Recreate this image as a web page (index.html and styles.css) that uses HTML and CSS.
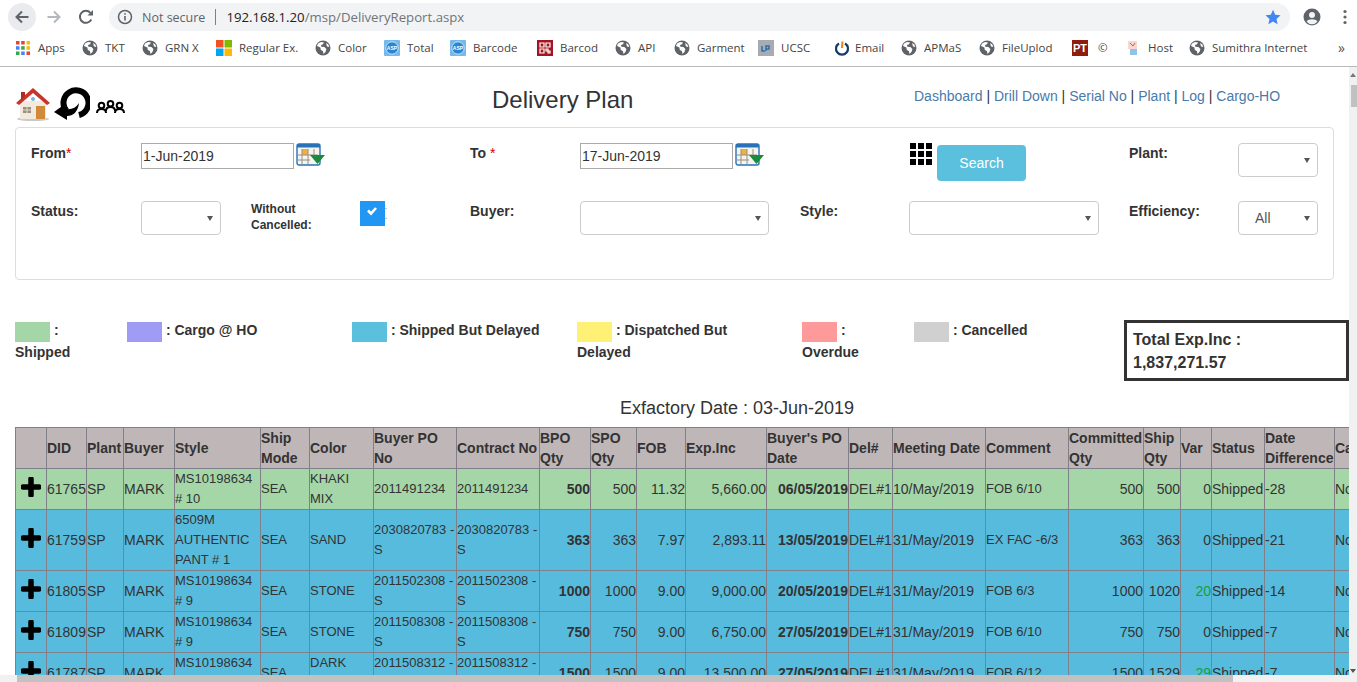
FILE: index.html
```html
<!DOCTYPE html>
<html lang="en">
<head>
<meta charset="utf-8">
<title>Delivery Plan</title>
<link rel="stylesheet" href="styles.css">
</head>
<body>
<svg class="defs" width="0" height="0" aria-hidden="true">
  <symbol id="globe" viewBox="0 0 16 16">
    <circle cx="8" cy="8" r="7.5" fill="#5f6368"/>
    <path d="M3 3.500l3-1.600 3 .6-1 1.800-2 .6.4 1.800 3 .4 2 2-.8 2.600-2 2.200-.8-2.800-2-1.200-.4-2.400L2 6z" fill="#fff"/>
    <path d="M11 3l2.400 1.600.9 2.400-2.300-.6z" fill="#fff"/>
  </symbol>
  <symbol id="asp" viewBox="0 0 16 16">
    <rect width="16" height="16" rx="1" fill="#74b8ec"/>
    <circle cx="8" cy="8" r="6.200" fill="#2b86d2" stroke="#e6f2fb" stroke-width=".8"/>
    <text x="8" y="9.800" text-anchor="middle" font-family="Liberation Sans, sans-serif" font-size="5" font-weight="700" fill="#fff">ASP</text>
  </symbol>
  <symbol id="cal" viewBox="0 0 30 26">
    <rect x="1" y="1" width="23" height="21" rx="2" fill="#f4f4f0" stroke="#2a72b8" stroke-width="1.4"/>
    <rect x="1" y="1" width="23" height="3.500" fill="#2a72b8"/>
    <rect x="6" y="6" width="6" height="6" fill="#eeb040"/>
    <path d="M6 6v15M12 6v15M18 6v6M2 12h20M2 17h12" stroke="#9a8f80" stroke-width="1" fill="none"/>
    <path d="M14 12h15l-7.500 9z" fill="#1a8a3c"/>
  </symbol>
  <symbol id="plus" viewBox="0 0 20 20">
    <path d="M10 2v16M2 10h16" stroke="#000" stroke-width="5.500" stroke-linecap="round"/>
  </symbol>
</svg>

<header class="toolbar">
  <button class="nav nav-back" type="button" aria-label="Back">
    <svg width="16" height="16" viewBox="0 0 16 16"><path d="M14.500 8H3M8 2.500L2.500 8 8 13.500" fill="none" stroke="#5f6368" stroke-width="2"/></svg>
  </button>
  <button class="nav nav-fwd" type="button" aria-label="Forward">
    <svg width="16" height="16" viewBox="0 0 16 16"><path d="M1.500 8H13M8 2.500L13.500 8 8 13.500" fill="none" stroke="#b4b7bb" stroke-width="2"/></svg>
  </button>
  <button class="nav nav-reload" type="button" aria-label="Reload">
    <svg width="16" height="16" viewBox="0 0 16 16"><path d="M13.300 10.500A6 6 0 1 1 12.400 3.800" fill="none" stroke="#5f6368" stroke-width="2"/><path d="M9.500 6.500H15V1z" fill="#5f6368"/></svg>
  </button>
  <div class="omnibox">
    <svg class="omni-info" width="16" height="16" viewBox="0 0 16 16"><circle cx="8" cy="8" r="6.500" fill="none" stroke="#5f6368" stroke-width="1.500"/><path d="M8 7v4.500M8 4.300v1.500" stroke="#5f6368" stroke-width="1.600"/></svg>
    <span class="omni-secure">Not secure</span>
    <span class="omni-sep"></span>
    <span class="omni-url"><b>192.168.1.20</b>/msp/DeliveryReport.aspx</span>
    <svg class="omni-star" width="16" height="16" viewBox="0 0 16 16"><path d="M8 .8l2.200 4.900 5.300.6-4 3.600 1.100 5.300L8 12.500l-4.600 2.700 1.100-5.300-4-3.600 5.300-.6z" fill="#4285f4"/></svg>
  </div>
  <svg class="avatar" width="18" height="18" viewBox="0 0 18 18"><circle cx="9" cy="9" r="8.500" fill="#5f6368"/><circle cx="9" cy="7" r="3" fill="#f1f3f4"/><path d="M3.500 13.500c2-3 9-3 11 0a7 7 0 0 1-11 0z" fill="#f1f3f4"/></svg>
  <svg class="dots" width="4" height="16" viewBox="0 0 4 16"><circle cx="2" cy="2.500" r="1.600" fill="#5f6368"/><circle cx="2" cy="8" r="1.600" fill="#5f6368"/><circle cx="2" cy="13.500" r="1.600" fill="#5f6368"/></svg>
</header>

<nav class="bookmarks">
  <a class="bm"><svg class="bm-ico" viewBox="0 0 16 16"><rect x="1" y="1" width="3.500" height="3.500" fill="#ea4335"/><rect x="6.200" y="1" width="3.500" height="3.500" fill="#ea4335"/><rect x="11.500" y="1" width="3.500" height="3.500" fill="#fbbc04"/><rect x="1" y="6.200" width="3.500" height="3.500" fill="#4285f4"/><rect x="6.200" y="6.200" width="3.500" height="3.500" fill="#34a853"/><rect x="11.500" y="6.200" width="3.500" height="3.500" fill="#fbbc04"/><rect x="1" y="11.500" width="3.500" height="3.500" fill="#34a853"/><rect x="6.200" y="11.500" width="3.500" height="3.500" fill="#4285f4"/><rect x="11.500" y="11.500" width="3.500" height="3.500" fill="#ea4335"/></svg>Apps</a>
  <a class="bm"><svg class="bm-ico"><use href="#globe"/></svg>TKT</a>
  <a class="bm"><svg class="bm-ico"><use href="#globe"/></svg>GRN X</a>
  <a class="bm"><svg class="bm-ico" viewBox="0 0 16 16"><rect width="7.500" height="7.500" fill="#f25022"/><rect x="8.500" width="7.500" height="7.500" fill="#7fba00"/><rect y="8.500" width="7.500" height="7.500" fill="#00a4ef"/><rect x="8.500" y="8.500" width="7.500" height="7.500" fill="#ffb900"/></svg>Regular Ex.</a>
  <a class="bm"><svg class="bm-ico"><use href="#globe"/></svg>Color</a>
  <a class="bm"><svg class="bm-ico"><use href="#asp"/></svg>Total</a>
  <a class="bm"><svg class="bm-ico"><use href="#asp"/></svg>Barcode</a>
  <a class="bm"><svg class="bm-ico" viewBox="0 0 16 16"><rect width="16" height="16" fill="#a31621"/><path d="M3 3h4v4H3zM9 3h4v4H9zM3 9h4v4H3zM9 9h2v2H9zM11 11h2v2h-2z" fill="none" stroke="#fff" stroke-width="1.200"/></svg>Barcod</a>
  <a class="bm"><svg class="bm-ico"><use href="#globe"/></svg>API</a>
  <a class="bm"><svg class="bm-ico"><use href="#globe"/></svg>Garment</a>
  <a class="bm"><svg class="bm-ico" viewBox="0 0 16 16"><rect width="16" height="16" fill="#a8acb0"/><path d="M4 6v5h3M8 11V6h3v3H8" fill="none" stroke="#2a70b0" stroke-width="1.500"/></svg>UCSC</a>
  <a class="bm bm-tight"><svg class="bm-ico" viewBox="0 0 16 16"><path d="M5 3.500a6 6 0 1 0 6 0" fill="none" stroke="#123a6b" stroke-width="2.200"/><path d="M8.500 1.500L8 8" stroke="#e8821e" stroke-width="2"/></svg>Email</a>
  <a class="bm"><svg class="bm-ico"><use href="#globe"/></svg>APMaS</a>
  <a class="bm"><svg class="bm-ico"><use href="#globe"/></svg>FileUplod</a>
  <a class="bm"><span class="bm-pt">PT</span>©</a>
  <a class="bm"><svg class="bm-ico" viewBox="0 0 16 16"><rect x="3" y="1" width="9" height="8" fill="#f6d8d0"/><path d="M5 3l3 3 2-3" stroke="#d9583c" fill="none"/><rect x="5" y="9" width="7" height="6" fill="#8fc4ea"/></svg>Host</a>
  <a class="bm"><svg class="bm-ico"><use href="#globe"/></svg>Sumithra Internet</a>
  <span class="bm-more">»</span>
</nav>

<div class="viewport">
  <div class="vp-row">
    <main class="page">
      <div class="top">
        <div class="top-icons">
          <svg width="36" height="34" viewBox="0 0 36 34">
            <ellipse cx="18" cy="32" rx="16" ry="2" fill="#c9c9c9"/>
            <path d="M5 14h26v18H5z" fill="#f3eadf"/>
            <path d="M1 16L18 1l17 15-3 2L18 6 4 18z" fill="#c8342a"/>
            <path d="M6 5h4v4l-4 4z" fill="#b02a22"/>
            <circle cx="18" cy="12" r="2" fill="#7fb2dc"/>
            <rect x="21" y="19" width="9" height="13" fill="#d08a3a"/>
            <rect x="8" y="20" width="8" height="6" fill="#9a8f78"/>
            <path d="M12 20v6M8 23h8" stroke="#f3eadf" stroke-width=".8"/>
          </svg>
          <svg class="top-reload" width="36" height="34" viewBox="0 0 36 34">
            <path d="M12.500 24A12.500 12.500 0 1 1 25 28" fill="none" stroke="#000" stroke-width="6"/>
            <path d="M0 25l11-8 1 5c5 1 10-1 13-6-1 9-6 13-12 13l0 4z" fill="#000"/>
          </svg>
          <svg class="top-people" width="29" height="14" viewBox="0 0 29 14">
            <g fill="none" stroke="#000" stroke-width="2">
              <circle cx="5.500" cy="5.500" r="2.800"/><path d="M1 13c0-3 2-4 4.500-4s4.500 1 4.500 4"/>
              <circle cx="14.500" cy="3.800" r="2.800"/><path d="M10 11c0-3 2-4 4.500-4s4.500 1 4.500 4"/>
              <circle cx="23.500" cy="5.500" r="2.800"/><path d="M19 13c0-3 2-4 4.500-4s4.500 1 4.500 4"/>
            </g>
          </svg>
        </div>
        <h1 class="title">Delivery Plan</h1>
        <div class="links"><a>Dashboard</a> | <a>Drill Down</a> | <a>Serial No</a> | <a>Plant</a> | <a>Log</a> | <a>Cargo-HO</a></div>
      </div>

      <section class="filters">
        <label class="lbl">From<span class="req">*</span></label>
        <div class="date-cell span-2">
          <input class="date" type="text" value="1-Jun-2019">
          <svg class="cal"><use href="#cal"/></svg>
        </div>
        <div class="blank"></div>
        <label class="lbl">To <span class="req">*</span></label>
        <div class="date-cell">
          <input class="date" type="text" value="17-Jun-2019">
          <svg class="cal"><use href="#cal"/></svg>
        </div>
        <div class="blank"></div>
        <div class="search-cell">
          <svg class="grid-ico" width="22" height="23" viewBox="0 0 22 23"><path d="M0 0h6v6H0zM8 0h6v6H8zM16 0h6v6h-6zM0 8h6v6H0zM8 8h6v6H8zM16 8h6v6h-6zM0 16h6v6H0zM8 16h6v6H8zM16 16h6v6h-6z" fill="#000"/></svg>
          <button class="search" type="button">Search</button>
        </div>
        <label class="lbl">Plant:</label>
        <div class="sel"><select><option></option></select></div>

        <label class="lbl">Status:</label>
        <div class="sel"><select><option></option></select></div>
        <label class="lbl lbl-small">Without Cancelled:</label>
        <div class="check"><svg width="27" height="25" viewBox="0 0 27 25"><path d="M25 7.500a5 5 0 0 1 0 10" fill="none" stroke="#bbb" stroke-width="1"/><rect width="25" height="25" fill="#2196f3"/><path d="M8 9.500l3 3 5-5.500" fill="none" stroke="#fff" stroke-width="2.600"/></svg></div>
        <label class="lbl">Buyer:</label>
        <div class="sel sel-buyer"><select><option></option></select></div>
        <label class="lbl lbl-style">Style:</label>
        <div class="sel sel-style"><select><option></option></select></div>
        <label class="lbl">Efficiency:</label>
        <div class="sel"><select><option>All</option></select></div>
      </section>

      <section class="legend">
        <div class="lg"><span class="sw sw-green"></span> : Shipped</div>
        <div class="lg"><span class="sw sw-purple"></span> : Cargo @ HO</div>
        <div class="lg"><span class="sw sw-blue"></span> : Shipped But Delayed</div>
        <div class="lg"><span class="sw sw-yellow"></span> : Dispatched But Delayed</div>
        <div class="lg"><span class="sw sw-red"></span> : Overdue</div>
        <div class="lg"><span class="sw sw-grey"></span> : Cancelled</div>
        <div class="total">Total Exp.Inc : 1,837,271.57</div>
      </section>

      <h2 class="exf">Exfactory Date : 03-Jun-2019</h2>

      <table class="report">
        <colgroup>
          <col><col><col><col><col><col><col><col><col><col><col><col><col><col><col><col><col><col><col><col><col><col><col>
        </colgroup>
        <thead>
          <tr><th></th><th>DID</th><th>Plant</th><th>Buyer</th><th>Style</th><th>Ship Mode</th><th>Color</th><th>Buyer PO No</th><th>Contract No</th><th>BPO Qty</th><th>SPO Qty</th><th>FOB</th><th>Exp.Inc</th><th>Buyer's PO Date</th><th>Del#</th><th>Meeting Date</th><th>Comment</th><th>Committed Qty</th><th>Ship Qty</th><th>Var</th><th>Status</th><th>Date Difference</th><th>Cancelled</th></tr>
        </thead>
        <tbody>
          <tr class="r-green"><td><svg class="plus"><use href="#plus"/></svg></td><td>61765</td><td>SP</td><td>MARK</td><td class="s">MS10198634 # 10</td><td class="s">SEA</td><td class="s">KHAKI MIX</td><td class="s">2011491234</td><td class="s">2011491234</td><td class="n b">500</td><td class="n">500</td><td class="n">11.32</td><td class="n">5,660.00</td><td class="n b">06/05/2019</td><td>DEL#1</td><td>10/May/2019</td><td class="s">FOB 6/10</td><td class="n">500</td><td class="n">500</td><td class="n">0</td><td>Shipped</td><td>-28</td><td>No</td></tr>
          <tr class="r-blue"><td><svg class="plus"><use href="#plus"/></svg></td><td>61759</td><td>SP</td><td>MARK</td><td class="s">6509M AUTHENTIC PANT # 1</td><td class="s">SEA</td><td class="s">SAND</td><td class="s">2030820783 - S</td><td class="s">2030820783 - S</td><td class="n b">363</td><td class="n">363</td><td class="n">7.97</td><td class="n">2,893.11</td><td class="n b">13/05/2019</td><td>DEL#1</td><td>31/May/2019</td><td class="s">EX FAC -6/3</td><td class="n">363</td><td class="n">363</td><td class="n">0</td><td>Shipped</td><td>-21</td><td>No</td></tr>
          <tr class="r-blue"><td><svg class="plus"><use href="#plus"/></svg></td><td>61805</td><td>SP</td><td>MARK</td><td class="s">MS10198634 # 9</td><td class="s">SEA</td><td class="s">STONE</td><td class="s">2011502308 - S</td><td class="s">2011502308 - S</td><td class="n b">1000</td><td class="n">1000</td><td class="n">9.00</td><td class="n">9,000.00</td><td class="n b">20/05/2019</td><td>DEL#1</td><td>31/May/2019</td><td class="s">FOB 6/3</td><td class="n">1000</td><td class="n">1020</td><td class="n pos">20</td><td>Shipped</td><td>-14</td><td>No</td></tr>
          <tr class="r-blue"><td><svg class="plus"><use href="#plus"/></svg></td><td>61809</td><td>SP</td><td>MARK</td><td class="s">MS10198634 # 9</td><td class="s">SEA</td><td class="s">STONE</td><td class="s">2011508308 - S</td><td class="s">2011508308 - S</td><td class="n b">750</td><td class="n">750</td><td class="n">9.00</td><td class="n">6,750.00</td><td class="n b">27/05/2019</td><td>DEL#1</td><td>31/May/2019</td><td class="s">FOB 6/10</td><td class="n">750</td><td class="n">750</td><td class="n">0</td><td>Shipped</td><td>-7</td><td>No</td></tr>
          <tr class="r-blue"><td><svg class="plus"><use href="#plus"/></svg></td><td>61787</td><td>SP</td><td>MARK</td><td class="s">MS10198634 # 9</td><td class="s">SEA</td><td class="s">DARK STONE</td><td class="s">2011508312 - S</td><td class="s">2011508312 - S</td><td class="n b">1500</td><td class="n">1500</td><td class="n">9.00</td><td class="n">13,500.00</td><td class="n b">27/05/2019</td><td>DEL#1</td><td>31/May/2019</td><td class="s">FOB 6/12</td><td class="n">1500</td><td class="n">1529</td><td class="n pos">29</td><td>Shipped</td><td>-7</td><td>No</td></tr>
        </tbody>
      </table>
    </main>
    <aside class="vbar">
      <span class="vbar-arrow"></span>
      <span class="vbar-thumb"></span>
      <span class="vbar-spacer"></span>
      <span class="vbar-arrow-down"></span>
    </aside>
  </div>
  <div class="hbar"><span class="hbar-thumb"></span></div>
</div>
</body>
</html>
```

FILE: styles.css
```css
* { box-sizing: border-box; }
html, body { margin: 0; height: 682px; overflow: hidden; background: #fff; }
body { width: 1357px; font-family: "Liberation Sans", Arial, sans-serif; font-size: 14px; color: #333; display: flex; flex-direction: column; }
.defs { position: absolute; }
a { color: inherit; text-decoration: none; }

/* browser toolbar */
.toolbar { height: 33px; flex: none; display: flex; align-items: center; background: #fff; padding-top: 1px; }
.nav { width: 28px; height: 28px; border: 0; padding: 0; border-radius: 50%; background: transparent; display: flex; align-items: center; justify-content: center; flex: none; }
.nav-back { background: #e9ebee; margin-left: 8px; }
.nav-fwd { margin-left: 4px; }
.nav-reload { margin-left: 4px; }
.omnibox { width: 1181px; height: 28px; margin-left: 9px; border-radius: 14px; background: #f1f3f4; display: flex; align-items: center; padding-left: 8px; flex: none; font-family: "Open Sans", sans-serif; font-size: 12.500px; color: #70757a; }
.omni-info { flex: none; }
.omni-secure { margin-left: 9px; color: #5f6368; }
.omni-sep { width: 1px; height: 16px; background: #7d8186; margin: 0 10px 0 10px; }
.omni-url b { font-weight: 400; color: #202124; }
.omni-url { flex: 1; font-size: 13.200px; }
.omni-star { margin-right: 9px; }
.avatar { margin-left: 13px; flex: none; }
.dots { margin-left: 22px; flex: none; }

/* bookmarks */
.bookmarks { height: 34px; flex: none; display: grid; grid-template-columns: 67px 60px 74px 99px 69px 66px 87px 78px 59px 84px 76px 67px 78px 93px 53px 64px 149px 19px; padding: 0 0 4px 15px; align-items: center; border-bottom: 1px solid #b9b9b9; font-family: "Open Sans", sans-serif; font-size: 11.500px; color: #444; }
.bm { display: flex; align-items: center; gap: 7px; white-space: nowrap; }
.bm-tight { gap: 5px; }
.bm-ico { width: 16px; height: 16px; flex: none; }
.bm-pt { width: 16px; height: 16px; flex: none; background: #8e1d0e; color: #fff; font: bold 11px/16px "Liberation Sans", sans-serif; text-align: center; margin-right: 3px; }
.bm-more { font-size: 14px; color: #555; }

/* viewport */
.viewport { flex: 1; min-height: 0; display: flex; flex-direction: column; }
.vp-row { flex: 1; min-height: 0; display: flex; }
.page { width: 1349px; flex: none; overflow: hidden; padding-left: 15px; }
.vbar { width: 8px; flex: none; background: #f1f1f1; display: flex; flex-direction: column; align-items: center; padding-top: 6px; }
.vbar-arrow { width: 0; height: 0; border: 3px solid transparent; border-top: 0; border-bottom: 4px solid #777; }
.vbar-thumb { width: 6px; height: 22px; background: #c1c1c1; margin-top: 8px; align-self: flex-end; }
.vbar-spacer { flex: 1; }
.vbar-arrow-down { width: 0; height: 0; border: 3px solid transparent; border-bottom: 0; border-top: 4px solid #555; margin-bottom: 2px; }
.hbar { height: 7px; flex: none; background: #f1f1f1; padding-left: 17px; }
.hbar-thumb { display: block; width: 1216px; height: 7px; background: #c1c1c1; }

/* top row */
.top { height: 60px; display: flex; align-items: flex-start; padding-top: 20px; }
.top-icons { width: 477px; flex: none; display: flex; align-items: flex-end; }
.top-reload { margin-left: 3px; }
.top-people { margin-left: 6px; margin-bottom: 7px; }
.title { margin: 0; width: 422px; flex: none; font-size: 24px; font-weight: 400; line-height: 26px; }
.links { margin-top: -1px; color: #333; font-size: 14px; line-height: 20px; }
.links a { color: #4a7aa8; }

/* filters */
.filters { width: 1319px; height: 153px; border: 1px solid #ddd; border-radius: 4px; padding: 15px 0 0 15px; display: grid; grid-template-columns: 110px 110px 109px 110px 110px 220px 109px 220px 109px 80px; grid-template-rows: 58px 58px; align-items: start; }
.lbl { font-weight: 700; font-size: 14px; line-height: 20px; color: #333; }
.lbl-small { font-size: 12px; line-height: 16px; padding-right: 20px; }
.req { color: #c00; font-weight: 400; }
.date-cell { display: flex; align-items: flex-start; }
.span-2 { grid-column: span 2; }
.date { width: 153px; height: 26px; border: 1px solid #aaa; padding: 0 1px; font: 14px "Liberation Sans", sans-serif; color: #333; background: #fff; flex: none; }
.cal { width: 30px; height: 26px; margin-left: 2px; flex: none; }
.search-cell { display: flex; align-items: flex-start; gap: 5px; padding-left: 1px; }
.search { width: 89px; height: 36px; margin-top: 2px; border: 0; border-radius: 4px; background: #5bc0de; color: #fff; font: 14px "Liberation Sans", sans-serif; }
.sel { position: relative; width: 80px; }
.sel-buyer { width: 189px; }
.sel-style { width: 190px; }
.sel select { appearance: none; -webkit-appearance: none; width: 100%; height: 34px; border: 1px solid #ccc; border-radius: 4px; background: #fff; padding: 0 16px; font: 14px "Liberation Sans", sans-serif; color: #555; display: block; }
.sel::after { content: ""; position: absolute; right: 8px; top: 15px; border: 3px solid transparent; border-top: 5px solid #555; border-bottom: 0; }
.check { display: flex; }

/* legend */
.legend { margin-top: 40px; display: grid; grid-template-columns: 112px 225px 225px 225px 112px 210px 225px; height: 61px; }
.lg { font-weight: 700; line-height: 20px; padding-right: 20px; color: #333; }
.sw { display: inline-block; width: 35px; height: 20px; vertical-align: -7px; }
.sw-green { background: #a5d6a7; }
.sw-purple { background: #9f9cf5; }
.sw-blue { background: #5bc0de; }
.sw-yellow { background: #fff176; }
.sw-red { background: #ff9a9a; }
.sw-grey { background: #d0d0d0; }
.total { border: 3px solid #333; padding: 5px 60px 4px 6px; font-size: 16px; font-weight: 700; line-height: 23px; height: 61px; }

.exf { margin: 17px 0 9px 605px; font-size: 18px; line-height: 20px; font-weight: 400; white-space: nowrap; }

/* report table */
.report { table-layout: fixed; border-collapse: collapse; width: 1385px; font-size: 14px; line-height: 20px; color: #333; }
.report th, .report td { border: 1px solid #80808a; padding: 0; }
.report th { background: #bfb7b7; font-weight: 700; text-align: left; height: 40px; }
.report td { height: 41px; }
.report col:nth-child(1) { width: 31px; }
.report col:nth-child(2) { width: 40px; }
.report col:nth-child(3) { width: 37px; }
.report col:nth-child(4) { width: 51px; }
.report col:nth-child(5) { width: 86px; }
.report col:nth-child(6) { width: 49px; }
.report col:nth-child(7) { width: 64px; }
.report col:nth-child(8) { width: 83px; }
.report col:nth-child(9) { width: 83px; }
.report col:nth-child(10) { width: 51px; }
.report col:nth-child(11) { width: 46px; }
.report col:nth-child(12) { width: 49px; }
.report col:nth-child(13) { width: 81px; }
.report col:nth-child(14) { width: 82px; }
.report col:nth-child(15) { width: 44px; }
.report col:nth-child(16) { width: 93px; }
.report col:nth-child(17) { width: 83px; }
.report col:nth-child(18) { width: 75px; }
.report col:nth-child(19) { width: 37px; }
.report col:nth-child(20) { width: 31px; }
.report col:nth-child(21) { width: 53px; }
.report col:nth-child(22) { width: 70px; }
.report col:nth-child(23) { width: 66px; }
.r-green td { background: #a5d6a7; }
.r-blue td { background: #57bbdd; }
.report .s { font-size: 13px; }
.report .n { text-align: right; }
.report .b { font-weight: 700; }
.report .pos { color: #12a03c; }
.plus { display: block; width: 20px; height: 20px; margin: 0 0 5px 5px; }
```
